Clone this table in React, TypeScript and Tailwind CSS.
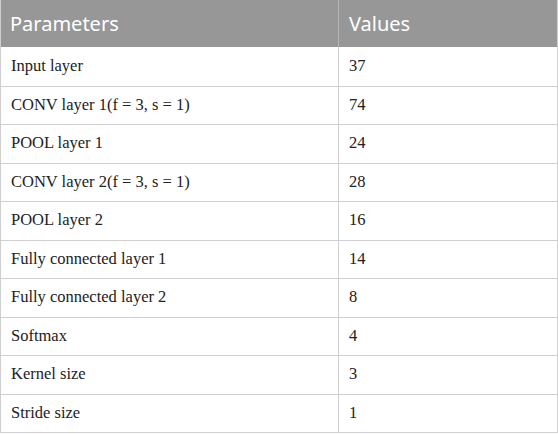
const rows: [string, string][] = [
  ["Input layer", "37"],
  ["CONV layer 1(f = 3, s = 1)", "74"],
  ["POOL layer 1", "24"],
  ["CONV layer 2(f = 3, s = 1)", "28"],
  ["POOL layer 2", "16"],
  ["Fully connected layer 1", "14"],
  ["Fully connected layer 2", "8"],
  ["Softmax", "4"],
  ["Kernel size", "3"],
  ["Stride size", "1"],
];

export default function App() {
  return (
    <div className="w-[558px] h-[434px] bg-white">
      <div className="border-x border-b border-[#cfcfcf]">
        <div className="flex h-[47px] bg-[#979797] text-white text-[20px] font-['Noto_Sans',sans-serif]">
          <div className="w-[338px] flex items-center pl-[9px] border-r border-[#b5b5b5]">Parameters</div>
          <div className="flex-1 flex items-center pl-[10px]">Values</div>
        </div>
        {rows.map(([param, value], i) => (
          <div
            key={i}
            className={`flex h-[38.5px] text-[16.5px] text-[#222] font-['Liberation_Serif',serif] ${
              i === 0 ? "" : "border-t border-[#cfcfcf]"
            }`}
          >
            <div className="w-[338px] flex items-center pl-[10px] border-r border-[#cfcfcf]">{param}</div>
            <div className="flex-1 flex items-center pl-[10px]">{value}</div>
          </div>
        ))}
      </div>
    </div>
  );
}
